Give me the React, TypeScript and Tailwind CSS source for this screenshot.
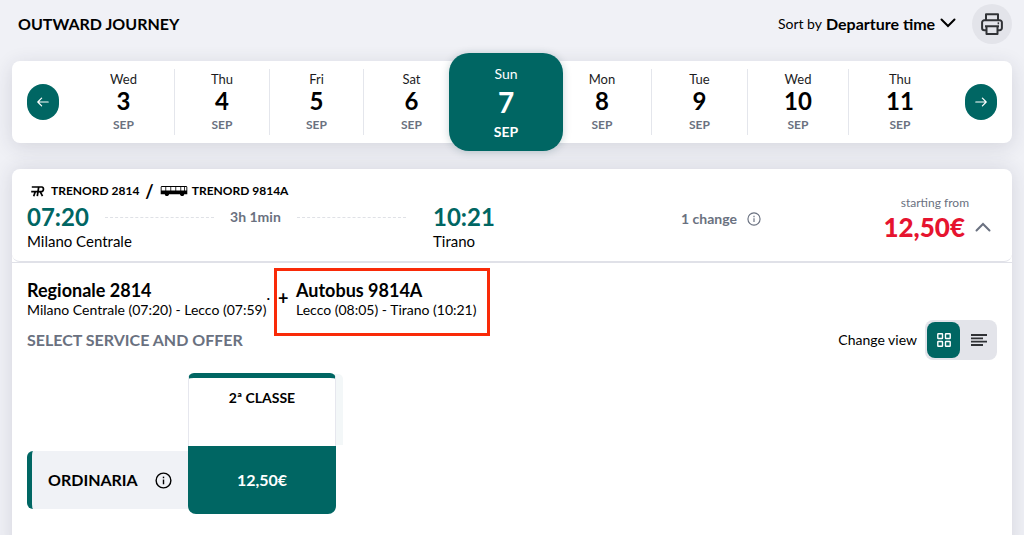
import React, { useState } from "react";

type Day = { weekday: string; day: number; month: string };

const days: Day[] = [
  { weekday: "Wed", day: 3, month: "SEP" },
  { weekday: "Thu", day: 4, month: "SEP" },
  { weekday: "Fri", day: 5, month: "SEP" },
  { weekday: "Sat", day: 6, month: "SEP" },
  { weekday: "Sun", day: 7, month: "SEP" },
  { weekday: "Mon", day: 8, month: "SEP" },
  { weekday: "Tue", day: 9, month: "SEP" },
  { weekday: "Wed", day: 10, month: "SEP" },
  { weekday: "Thu", day: 11, month: "SEP" },
];

function ArrowIcon({ flipped = false }: { flipped?: boolean }) {
  return (
    <svg viewBox="0 0 12 10" className="h-2.5 w-3" fill="none" stroke="currentColor" strokeWidth="1.2" strokeLinecap="round" strokeLinejoin="round" aria-hidden="true">
      <path d={flipped ? "M.8 5H11.2M7.4 1.2 11.2 5 7.4 8.8" : "M11.2 5H.8M4.6 1.2.8 5l3.8 3.8"} />
    </svg>
  );
}

function PrinterIcon() {
  return (
    <svg viewBox="0 0 24 24" className="h-6 w-6" fill="none" stroke="currentColor" strokeWidth="2" strokeLinejoin="round" aria-hidden="true">
      <path d="M6 8V2.2h12V8" />
      <path d="M6.5 18.2H4.4a2.3 2.3 0 0 1-2.3-2.3V10.5A2.3 2.3 0 0 1 4.4 8.2h15.2a2.3 2.3 0 0 1 2.3 2.3v5.400a2.3 2.3 0 0 1-2.3 2.3h-2.1" />
      <path d="M6.5 14.3h11v7.7h-11zM5 14.3h14" />
      <path d="M17.6 11.3h1.5" />
    </svg>
  );
}

function InfoIcon({ className }: { className: string }) {
  return (
    <svg viewBox="0 0 18 18" className={className} fill="none" stroke="currentColor" strokeWidth="1.5" aria-hidden="true">
      <circle cx="9" cy="9" r="7.8" />
      <path d="M9 8v5" />
      <path d="M9 4.9v1.7" />
    </svg>
  );
}

function RegionalIcon() {
  return (
    <svg viewBox="0 0 14 12" className="h-3 w-3.5" fill="none" stroke="currentColor" strokeWidth="1.7" aria-hidden="true">
      <path d="M.8 2h10c2.300 0 2.200 4.600-.3 4.600H.2" />
      <path d="M4.300 6.400 2.700 11.200M7.700 2 6.300 11.200M9.200 6.600l2.300 4.600" />
    </svg>
  );
}

function BusIcon() {
  return (
    <svg viewBox="0 0 28 12" className="h-3 w-7" aria-hidden="true">
      <path fill="currentColor" d="M1.500 1h25l.8 1v7.300h-3a2.200 2.200 0 0 1-4.300 0H9a2.200 2.200 0 0 1-4.300 0H.7V2z" />
      <path fill="white" d="M1.600 2h3.800v3.600H1.600zM6.200 2h4.200v3.600H6.200zM11.200 2h4.200v3.600h-4.200zM16.200 2h4.200v3.600h-4.200zM21.200 2h3v3.600h-3zM25 2h1.400v3.600H25z" />
      <circle cx="6.85" cy="9.3" r="1.8" fill="currentColor" />
      <circle cx="22.15" cy="9.3" r="1.8" fill="currentColor" />
    </svg>
  );
}

function GridIcon() {
  return (
    <svg viewBox="0 0 14 14" className="h-3.5 w-3.5" fill="none" stroke="currentColor" strokeWidth="1.4" aria-hidden="true">
      <rect x=".8" y=".8" width="4.7" height="4.7" rx=".5" />
      <rect x="8.5" y=".8" width="4.7" height="4.7" rx=".5" />
      <rect x=".8" y="8.5" width="4.7" height="4.7" rx=".5" />
      <rect x="8.5" y="8.5" width="4.7" height="4.7" rx=".5" />
    </svg>
  );
}

function ListIcon() {
  return (
    <svg viewBox="0 0 16 12" className="h-3 w-4" fill="none" stroke="currentColor" strokeWidth="1.8" aria-hidden="true">
      <path d="M0 1h16M0 4.300h12M0 7.700h16M0 11h12" />
    </svg>
  );
}

function Chevron({ up = false, className }: { up?: boolean; className: string }) {
  return (
    <svg viewBox="0 0 16 10" className={className} fill="none" stroke="currentColor" strokeWidth="2" strokeLinecap="round" aria-hidden="true">
      <path d={up ? "M1.5 8.500 8 2l6.500 6.500" : "M1.5 1.500 8 8l6.500-6.500"} />
    </svg>
  );
}

function DayCell({ item, active, divided, onSelect }: { item: Day; active: boolean; divided: boolean; onSelect: () => void }) {
  if (active) {
    return (
      <button type="button" aria-pressed="true" onClick={onSelect} className="relative z-10 -mx-2.5 -my-2 flex flex-col items-center justify-center rounded-[20px] bg-[#006663] pt-1 text-white shadow-[0_1px_8px_rgba(0,60,70,0.22)]">
        <span className="text-sm leading-5">{item.weekday}</span>
        <span className="text-[28px] leading-9 font-bold">{item.day}</span>
        <span className="text-sm leading-6 font-bold">{item.month}</span>
      </button>
    );
  }
  return (
    <button type="button" aria-pressed="false" onClick={onSelect} className={divided ? "my-2 flex flex-col items-center justify-center border-r border-[#e4e6ec] pt-0.5" : "my-2 flex flex-col items-center justify-center pt-0.5"}>
      <span className="text-[13px] leading-4 text-[#1c1c1e]">{item.weekday}</span>
      <span className="text-2xl leading-7 font-bold">{item.day}</span>
      <span className="text-xs leading-5 font-bold text-[#6a7180]">{item.month}</span>
    </button>
  );
}

function DatePicker() {
  const [selected, setSelected] = useState(4);
  return (
    <nav aria-label="Travel date" className="flex h-[82px] items-center rounded-lg bg-white px-[15px] shadow-[0_4px_20px_rgba(40,40,70,0.14)]">
      <button type="button" aria-label="Previous day" onClick={() => setSelected(Math.max(0, selected - 1))} className="flex h-9 w-8 shrink-0 items-center justify-center rounded-full bg-[#006663] text-white">
        <ArrowIcon />
      </button>
      <div className="mx-3.5 grid flex-1 grid-cols-[102fr_95fr_94fr_95fr_94fr_99fr_96fr_101fr_102fr] self-stretch">
        {days.map((item, i) => (
          <DayCell key={item.day} item={item} active={i === selected} divided={i < days.length - 1 && i + 1 !== selected} onSelect={() => setSelected(i)} />
        ))}
      </div>
      <button type="button" aria-label="Next day" onClick={() => setSelected(Math.min(days.length - 1, selected + 1))} className="flex h-9 w-8 shrink-0 items-center justify-center rounded-full bg-[#006663] text-white">
        <ArrowIcon flipped />
      </button>
    </nav>
  );
}

function JourneySummary() {
  return (
    <div className="rounded-lg border-b border-[#e0e1e8] px-[15px] py-2.5">
      <div className="flex h-6 items-center pl-1 text-xs font-bold">
        <RegionalIcon />
        <span className="ml-1.5">TRENORD 2814</span>
        <span className="mx-1.5 text-lg leading-5">/</span>
        <BusIcon />
        <span className="ml-1">TRENORD 9814A</span>
      </div>
      <div className="grid grid-cols-[406fr_248fr_316fr]">
        <div>
          <div className="flex h-7 items-center gap-4 pr-[27px]">
            <span className="text-2xl font-bold text-[#006663]">07:20</span>
            <span className="flex-1 border-t border-dashed border-[#dfe1e6]" />
            <span className="text-sm font-bold text-[#6a7180]">3h 1min</span>
            <span className="flex-1 border-t border-dashed border-[#dfe1e6]" />
          </div>
          <p className="text-[15px] leading-5">Milano Centrale</p>
        </div>
        <div>
          <div className="flex h-7 items-center text-2xl font-bold text-[#006663]">10:21</div>
          <p className="text-[15px] leading-5">Tirano</p>
        </div>
        <div className="flex items-start justify-between">
          <div className="flex h-8 items-center gap-2.5 text-sm font-bold text-[#6a7180]">
            1 change
            <button type="button" aria-label="Change details">
              <InfoIcon className="h-3.5 w-3.5" />
            </button>
          </div>
          <div className="-mt-2 flex items-end">
            <div className="text-right">
              <p className="text-xs leading-4 text-[#6a7180]">starting from</p>
              <p className="mr-1 text-[26px] leading-8 font-black text-[#e6142f]">12,50€</p>
            </div>
            <button type="button" aria-label="Collapse journey" className="flex h-8 w-7 items-center justify-center text-[#6a7180]">
              <Chevron up className="h-2.5 w-4" />
            </button>
          </div>
        </div>
      </div>
    </div>
  );
}

function Offers() {
  return (
    <table className="mt-[13px] border-separate border-spacing-0">
      <thead>
        <tr>
          <td className="w-[161px] p-0" />
          <th scope="col" className="h-[73px] w-[148px] rounded-t-md border-x border-t-[5px] border-x-[#e6e7ee] border-t-[#006663] bg-white px-2 pt-2 text-center align-top text-sm leading-6 font-bold shadow-[8px_0_0_-1px_#f3f7f8]">
            2ª CLASSE
          </th>
        </tr>
      </thead>
      <tbody>
        <tr>
          <th scope="row" className="p-0 align-middle">
            <div className="flex h-[58px] items-center justify-between rounded-l-md border-l-[5px] border-[#006663] bg-[#f0f2f6] px-4">
              <span className="text-base font-bold">ORDINARIA</span>
              <button type="button" aria-label="Ordinaria details">
                <InfoIcon className="h-[17px] w-[17px]" />
              </button>
            </div>
          </th>
          <td className="h-[68px] rounded-b-lg bg-[#006663] p-0">
            <button type="button" className="h-[68px] w-full text-base font-bold text-white">12,50€</button>
          </td>
        </tr>
      </tbody>
    </table>
  );
}

function JourneyDetails() {
  const [view, setView] = useState<"grid" | "list">("grid");
  return (
    <div className="border-t border-[#e0e1e8] px-[15px] pt-[15px] pb-10">
      <div className="flex">
        <div>
          <h2 className="text-lg leading-6 font-bold">Regionale 2814</h2>
          <p className="text-sm leading-4">Milano Centrale (07:20) - Lecco (07:59)</p>
        </div>
        <span className="self-center text-sm leading-4">·</span>
        <div className="relative ml-2 flex">
          <div className="pointer-events-none absolute -top-2.5 -right-3.5 -bottom-4.5 -left-1 border-3 border-[#f92a08]" />
          <span className="w-[18px] self-center text-lg leading-5 font-bold">+</span>
          <div>
            <h2 className="text-lg leading-6 font-bold">Autobus 9814A</h2>
            <p className="text-sm leading-4">Lecco (08:05) - Tirano (10:21)</p>
          </div>
        </div>
      </div>
      <div className="mt-0.5 flex items-center justify-between">
        <h3 className="text-base font-bold text-[#6a7180]">SELECT SERVICE AND OFFER</h3>
        <div className="flex items-center gap-2">
          <span className="text-sm">Change view</span>
          <div className="flex h-10 w-[72px] items-center gap-0.5 rounded-lg bg-[#e3e4ea] p-0.5">
            <button type="button" aria-label="Grid view" aria-pressed={view === "grid"} onClick={() => setView("grid")} className={view === "grid" ? "flex h-9 flex-1 items-center justify-center rounded-lg bg-[#006663] text-white" : "flex h-9 flex-1 items-center justify-center rounded-lg text-[#303236]"}>
              <GridIcon />
            </button>
            <button type="button" aria-label="List view" aria-pressed={view === "list"} onClick={() => setView("list")} className={view === "list" ? "flex h-9 flex-1 items-center justify-center rounded-lg bg-[#006663] text-white" : "flex h-9 flex-1 items-center justify-center rounded-lg text-[#303236]"}>
              <ListIcon />
            </button>
          </div>
        </div>
      </div>
      <Offers />
    </div>
  );
}

export default function App() {
  return (
    <main className="h-screen overflow-hidden bg-[#f0f1f6] px-3 pt-1 font-['Lato',sans-serif] text-black">
      <header className="mb-[17px] flex h-10 items-center justify-between pl-1.5">
        <h1 className="text-base font-bold">OUTWARD JOURNEY</h1>
        <div className="flex items-center">
          <label htmlFor="sort" className="mr-1 text-sm">Sort by</label>
          <div className="relative">
            <select id="sort" className="appearance-none bg-transparent pr-6 text-base font-bold">
              <option>Departure time</option>
            </select>
            <Chevron className="pointer-events-none absolute top-1.5 right-1 h-2.5 w-4" />
          </div>
          <button type="button" aria-label="Print" className="ml-3 flex h-10 w-10 items-center justify-center rounded-full bg-[#e3e4ea] text-[#303236]">
            <PrinterIcon />
          </button>
        </div>
      </header>
      <DatePicker />
      <article className="mt-[26px] rounded-lg bg-white shadow-[0_0_20px_rgba(40,40,70,0.14)]">
        <JourneySummary />
        <JourneyDetails />
      </article>
    </main>
  );
}
